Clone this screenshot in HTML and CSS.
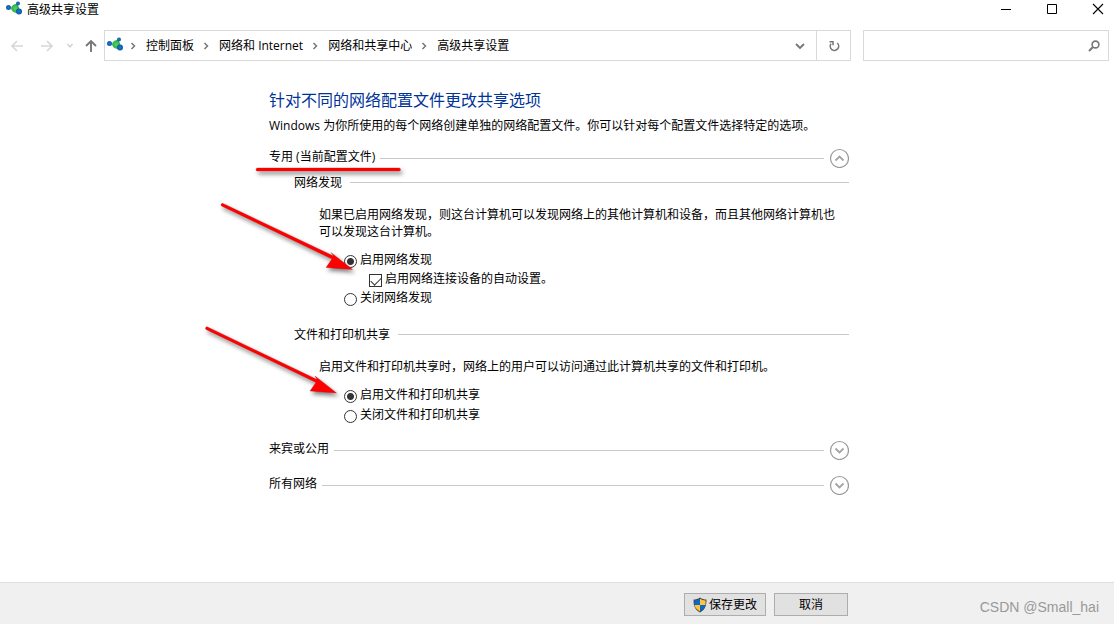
FILE: index.html
```html
<!DOCTYPE html>
<html lang="zh-CN">
<head>
<meta charset="utf-8">
<title>高级共享设置</title>
<link rel="stylesheet" href="styles.css">
</head>
<body>
<svg class="defs" width="0" height="0" aria-hidden="true">
  <defs>
    <radialGradient id="g-blue"><stop offset="0" stop-color="#2277cc"/><stop offset="1" stop-color="#0f57a5"/></radialGradient>
    <radialGradient id="g-green"><stop offset="0" stop-color="#55d469"/><stop offset="1" stop-color="#22ab3c"/></radialGradient>
    <symbol id="share" viewBox="0 0 16 16">
      <path d="M5 7C6 4.500 8 3 10.500 3C13 4.500 13.800 8 13.500 11C11 13 5.500 11.500 5 7z" fill="url(#g-green)"/>
      <circle cx="2.500" cy="6.500" r="2.500" fill="url(#g-blue)"/>
      <circle cx="12" cy="2.500" r="2" fill="url(#g-blue)"/>
      <circle cx="13" cy="10.500" r="3" fill="url(#g-blue)"/>
    </symbol>
    <symbol id="sep" viewBox="0 0 8 8"><path d="M2.500 1L5.500 4L2.500 7" fill="none" stroke="#777" stroke-width="1.500"/></symbol>
    <symbol id="down" viewBox="0 0 20 20"><circle cx="10.500" cy="10.500" r="9" fill="#fff" stroke="#999" stroke-width="1.200"/><path d="M6.500 8.500L10.500 12.500L14.500 8.500" fill="none" stroke="#a4a4a4" stroke-width="1.800"/></symbol>
    <symbol id="up" viewBox="0 0 20 20"><circle cx="10.500" cy="10.500" r="9" fill="#fff" stroke="#999" stroke-width="1.200"/><path d="M6.500 12.500L10.500 8.500L14.500 12.500" fill="none" stroke="#a4a4a4" stroke-width="1.800"/></symbol>
  </defs>
</svg>
<div class="window">
  <header class="titlebar">
    <svg class="share-icon" aria-hidden="true"><use href="#share"/></svg>
    <span class="title">高级共享设置</span>
    <div class="window-buttons">
      <button class="plain" aria-label="最小化"><svg width="12" height="12"><path d="M1 6.500h10" stroke="#000"/></svg></button>
      <button class="plain" aria-label="最大化"><svg width="12" height="12"><path d="M1.500 1.500h9v9h-9z" fill="none" stroke="#000"/></svg></button>
      <button class="plain" aria-label="关闭"><svg width="12" height="12"><path d="M1 1L11 11M11 1L1 11" stroke="#000" stroke-width="1.100"/></svg></button>
    </div>
  </header>
  <nav class="navbar">
    <div class="history">
      <button class="plain" aria-label="后退"><svg width="14" height="14"><path d="M13 7H2M7 2L2 7L7 12" fill="none" stroke="#d6d6d6" stroke-width="1.600"/></svg></button>
      <button class="plain" aria-label="前进"><svg width="14" height="14"><path d="M1 7H12M7 2L12 7L7 12" fill="none" stroke="#d6d6d6" stroke-width="1.600"/></svg></button>
      <button class="plain" aria-label="最近位置"><svg width="8" height="8"><path d="M1.500 2L4 5L6.500 2" fill="none" stroke="#d0d0d0" stroke-width="1.400"/></svg></button>
      <button class="plain" aria-label="上移"><svg width="14" height="14"><path d="M7 13V2M2 7L7 2L12 7" fill="none" stroke="#777" stroke-width="1.900"/></svg></button>
    </div>
    <div class="address">
      <svg class="share-icon" aria-hidden="true"><use href="#share"/></svg>
      <svg class="sep"><use href="#sep"/></svg><a href="#">控制面板</a>
      <svg class="sep"><use href="#sep"/></svg><a href="#">网络和 Internet</a>
      <svg class="sep"><use href="#sep"/></svg><a href="#">网络和共享中心</a>
      <svg class="sep"><use href="#sep"/></svg><a href="#">高级共享设置</a>
      <button class="plain drop" aria-label="展开"><svg width="10" height="8"><path d="M1 2L5 6L9 2" fill="none" stroke="#777" stroke-width="1.900"/></svg></button>
      <button class="plain refresh" aria-label="刷新"><svg width="12" height="12"><path d="M9.200 3A4.200 4.200 0 1 1 3 3.800" fill="none" stroke="#777" stroke-width="1.600"/><path d="M1.500 1.700H5V5.200" fill="none" stroke="#777" stroke-width="1.500"/></svg></button>
    </div>
    <div class="search">
      <input type="text" aria-label="搜索">
      <svg width="12" height="12" aria-hidden="true"><circle cx="7.500" cy="4.500" r="3.400" fill="none" stroke="#777" stroke-width="1.600"/><path d="M5 7L1 11" stroke="#777" stroke-width="2"/></svg>
    </div>
  </nav>
  <main class="content">
    <div class="column">
      <h1>针对不同的网络配置文件更改共享选项</h1>
      <p class="intro">Windows 为你所使用的每个网络创建单独的网络配置文件。你可以针对每个配置文件选择特定的选项。</p>
      <section class="profile">
        <div class="rule-row"><h2>专用 (当前配置文件)</h2><span class="rule"></span><button class="plain" aria-label="折叠"><svg class="circle"><use href="#up"/></svg></button></div>
        <section class="group">
          <div class="rule-row"><h3>网络发现</h3><span class="rule"></span></div>
          <div class="group-body">
            <p>如果已启用网络发现，则这台计算机可以发现网络上的其他计算机和设备，而且其他网络计算机也可以发现这台计算机。</p>
            <div class="options">
              <label><input type="radio" name="discovery" checked>启用网络发现</label>
              <label class="nested"><input type="checkbox" checked>启用网络连接设备的自动设置。</label>
              <label><input type="radio" name="discovery">关闭网络发现</label>
            </div>
          </div>
        </section>
        <section class="group">
          <div class="rule-row"><h3>文件和打印机共享</h3><span class="rule"></span></div>
          <div class="group-body">
            <p>启用文件和打印机共享时，网络上的用户可以访问通过此计算机共享的文件和打印机。</p>
            <div class="options spaced">
              <label><input type="radio" name="sharing" checked>启用文件和打印机共享</label>
              <label><input type="radio" name="sharing">关闭文件和打印机共享</label>
            </div>
          </div>
        </section>
      </section>
      <section class="profile"><div class="rule-row"><h2>来宾或公用</h2><span class="rule"></span><button class="plain" aria-label="展开"><svg class="circle"><use href="#down"/></svg></button></div></section>
      <section class="profile"><div class="rule-row"><h2>所有网络</h2><span class="rule"></span><button class="plain" aria-label="展开"><svg class="circle"><use href="#down"/></svg></button></div></section>
      <svg class="marks" viewBox="200 160 220 250" width="220" height="250" aria-hidden="true">
        <g fill="#f00" stroke="#c00000" stroke-width="0.300">
          <path d="M257.500 168H399a1.500 1.500 0 0 1 0 3H257.500a1.500 1.500 0 0 1 0-3z"/>
          <path d="M223 203.500L333.500 256L331 252.500L352.500 269.500L326 267.500L332 259L222 206.200A1.400 1.400 0 0 1 223 203.500z"/>
          <path d="M207.500 327L317 379.500L315 376L336.500 393L310 391L316 382.500L206.500 329.700A1.400 1.400 0 0 1 207.500 327z"/>
        </g>
      </svg>
    </div>
  </main>
  <footer class="actions">
    <button class="action save"><svg width="14" height="16" viewBox="0 0 14 16" aria-hidden="true"><path d="M7 .5C5 2 3 2.500.6 2.600C.3 8 1.500 12.500 7 15.500C12.500 12.500 13.700 8 13.400 2.600C11 2.500 9 2 7 .5z" fill="#444"/><path d="M7 1.800V8H1.500Q1.300 6 1.500 3.500Q4.500 3.300 7 1.800z" fill="#0b68c8"/><path d="M7 1.800V8h5.500Q12.700 6 12.500 3.500Q9.500 3.300 7 1.800z" fill="#ffc43c"/><path d="M7 8v6.400Q2.200 12 1.500 8z" fill="#ffc43c"/><path d="M7 8v6.400Q11.800 12 12.500 8z" fill="#0b68c8"/></svg>保存更改</button>
    <button class="action cancel">取消</button>
    <span class="watermark">CSDN @Small_hai</span>
  </footer>
</div>
</body>
</html>
```
FILE: styles.css
```css
* { box-sizing: border-box; }
body {
  margin: 0;
  background: #fff;
  color: #000;
  font: 12px/17px "Open Sans", "Noto Sans CJK SC", sans-serif;
}
h1, h2, h3, p { margin: 0; font-size: 12px; font-weight: 400; }
svg { display: block; flex: none; }
.defs { position: absolute; }
.window { min-height: 100vh; display: flex; flex-direction: column; }
.plain {
  border: 0;
  padding: 0;
  background: none;
  display: flex;
  align-items: center;
  justify-content: center;
}
.share-icon { width: 16px; height: 16px; }

.titlebar { display: flex; align-items: center; height: 18px; padding-left: 6px; gap: 5px; }
.window-buttons { display: flex; gap: 14px; margin-left: auto; }
.window-buttons button { width: 32px; height: 18px; }

.navbar { display: flex; align-items: center; margin-top: 12px; padding-right: 5px; }
.history { display: flex; align-items: center; width: 104px; padding-left: 10px; gap: 16px; }
.history button:nth-child(3) { margin: 0 -4px; }
.history button:nth-child(4) { margin-left: -2px; }
.address, .search { display: flex; align-items: center; height: 31px; border: 1px solid #d9d9d9; }
.address { flex: 63 1 0; padding-left: 2px; }
.address .share-icon { margin: 0 6px 2px 0; }
.address a { color: inherit; text-decoration: none; margin: 0 8px 0 9px; white-space: nowrap; }
.sep { width: 8px; height: 8px; }
.drop { width: 32px; height: 29px; margin-left: auto; }
.refresh { width: 34px; height: 29px; border-left: 1px solid #d9d9d9; }
.search { flex: 20 1 0; margin-left: 12px; padding-right: 8px; }
.search input { flex: 1; min-width: 0; height: 29px; border: 0; outline: 0; font: inherit; background: none; }

.content { flex: 1; padding: 27px 16px 16px 269px; }
.column { position: relative; max-width: 580px; }
h1 { font-size: 16px; line-height: 24px; color: #039; }
.intro { margin-top: 5px; line-height: 18px; }
.profile { margin-top: 15px; }
.intro + .profile { margin-top: 13px; }
.rule-row { display: flex; align-items: center; height: 20px; gap: 5px; }
.rule-row h2 { padding-bottom: 4px; }
.rule { flex: 1; height: 1px; background: #c8c8c8; }
.circle { width: 20px; height: 20px; }
.group { margin: 4px 0 0 25px; }
.group + .group { margin-top: 17px; }
.group .rule-row { gap: 8px; }
.group-body { padding: 14px 0 0 25px; }
.group-body p { max-width: 520px; }
.options { padding: 10px 0 0 25px; display: flex; flex-direction: column; align-items: flex-start; }
.spaced { gap: 1px; padding-bottom: 1px; }
.options label { display: flex; align-items: center; gap: 3px; height: 19px; }
.nested { margin-left: 25px; }
.options input {
  appearance: none;
  width: 13px;
  height: 13px;
  margin: 3px 0 0;
  border: 1px solid #333;
  background: #fff;
}
.options input[type="radio"] { border-radius: 50%; }
.options input[type="radio"]:checked { background: radial-gradient(circle, #333 0 3px, #fff 4px); }
.options input[type="checkbox"] { display: flex; }
.options input[type="checkbox"]:checked::before {
  content: "";
  width: 9px;
  height: 5px;
  margin: 2px 0 0 1px;
  border: solid #333;
  border-width: 0 0 1px 1px;
  transform: rotate(-45deg);
}
.marks {
  position: absolute;
  left: -69px;
  top: 72px;
  pointer-events: none;
  filter: drop-shadow(2px 3px 2px rgba(0, 0, 0, 0.5));
}

.actions {
  display: flex;
  align-items: center;
  gap: 8px;
  min-height: 42px;
  padding: 2px 15px 0 684px;
  border-top: 1px solid #dfdfdf;
  background: #f0f0f0;
}
.action {
  display: flex;
  align-items: center;
  justify-content: center;
  gap: 2px;
  height: 23px;
  padding: 0;
  border: 1px solid #adadad;
  background: #e1e1e1;
  color: #000;
  font: inherit;
}
.save { width: 82px; }
.cancel { width: 74px; }
.watermark {
  margin-left: auto;
  padding-top: 6px;
  color: #999;
  font: 14px/17px "Liberation Sans", Arial, sans-serif;
  white-space: nowrap;
}
```
